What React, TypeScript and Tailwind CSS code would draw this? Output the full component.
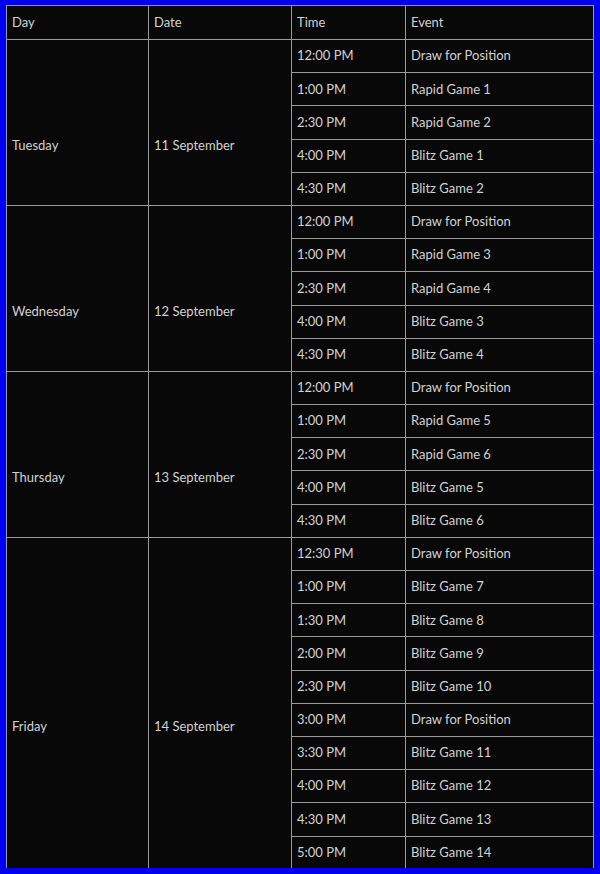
const schedule = [
  {
    day: "Tuesday",
    date: "11 September",
    events: [
      ["12:00 PM", "Draw for Position"],
      ["1:00 PM", "Rapid Game 1"],
      ["2:30 PM", "Rapid Game 2"],
      ["4:00 PM", "Blitz Game 1"],
      ["4:30 PM", "Blitz Game 2"],
    ],
  },
  {
    day: "Wednesday",
    date: "12 September",
    events: [
      ["12:00 PM", "Draw for Position"],
      ["1:00 PM", "Rapid Game 3"],
      ["2:30 PM", "Rapid Game 4"],
      ["4:00 PM", "Blitz Game 3"],
      ["4:30 PM", "Blitz Game 4"],
    ],
  },
  {
    day: "Thursday",
    date: "13 September",
    events: [
      ["12:00 PM", "Draw for Position"],
      ["1:00 PM", "Rapid Game 5"],
      ["2:30 PM", "Rapid Game 6"],
      ["4:00 PM", "Blitz Game 5"],
      ["4:30 PM", "Blitz Game 6"],
    ],
  },
  {
    day: "Friday",
    date: "14 September",
    events: [
      ["12:30 PM", "Draw for Position"],
      ["1:00 PM", "Blitz Game 7"],
      ["1:30 PM", "Blitz Game 8"],
      ["2:00 PM", "Blitz Game 9"],
      ["2:30 PM", "Blitz Game 10"],
      ["3:00 PM", "Draw for Position"],
      ["3:30 PM", "Blitz Game 11"],
      ["4:00 PM", "Blitz Game 12"],
      ["4:30 PM", "Blitz Game 13"],
      ["5:00 PM", "Blitz Game 14"],
    ],
  },
];

const cell = "border border-[#9a9a9a] px-[5px] align-middle";

export default function App() {
  return (
    <div className="h-[874px] w-[600px] overflow-hidden border-[6px] border-t-[5px] border-[#0000f0] bg-[#080808] font-['Lato',sans-serif] text-[13px] text-[#d2d2d2]">
      <table className="w-full table-fixed border-collapse">
        <colgroup>
          <col className="w-[142px]" />
          <col className="w-[143px]" />
          <col className="w-[114px]" />
          <col />
        </colgroup>
        <thead>
          <tr className="h-[34px] text-left">
            <th className={`${cell} font-normal`}>Day</th>
            <th className={`${cell} font-normal`}>Date</th>
            <th className={`${cell} font-normal`}>Time</th>
            <th className={`${cell} font-normal`}>Event</th>
          </tr>
        </thead>
        <tbody>
          {schedule.map((group) =>
            group.events.map(([time, event], i) => (
              <tr key={group.day + time + event} className="h-[33.2px]">
                {i === 0 && (
                  <>
                    <td rowSpan={group.events.length} className={`${cell} pt-[47px]`}>
                      {group.day}
                    </td>
                    <td rowSpan={group.events.length} className={`${cell} pt-[47px]`}>
                      {group.date}
                    </td>
                  </>
                )}
                <td className={cell}>{time}</td>
                <td className={cell}>{event}</td>
              </tr>
            ))
          )}
        </tbody>
      </table>
    </div>
  );
}
